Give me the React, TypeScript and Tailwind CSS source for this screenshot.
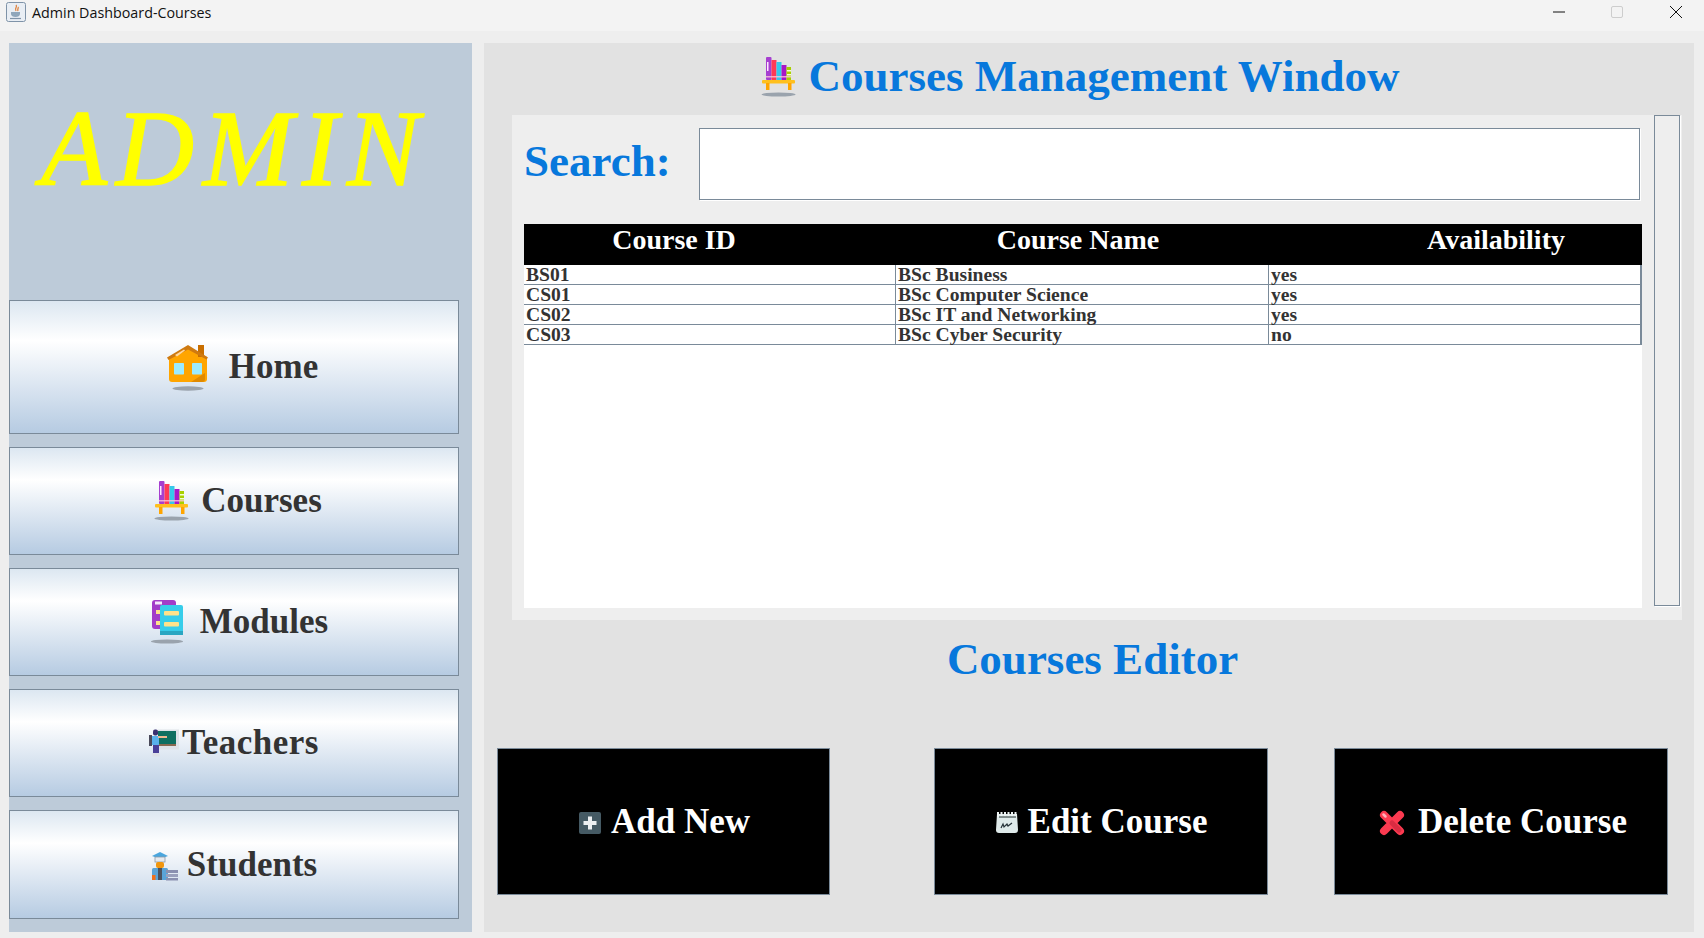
import React from 'react';

const serif = "font-['Liberation_Serif',serif]";

const JavaIcon = () => (
  <svg width="20" height="20" viewBox="0 0 20 20">
    <rect x="0.5" y="0.5" width="19" height="19" rx="2" fill="#e9eef4" stroke="#7f93a8" />
    <path d="M10 3c2 2-2 3 0 6M12 5c1 1-1 2 0 4" stroke="#e0803a" strokeWidth="1.3" fill="none" />
    <path d="M5 10h9v2c0 2-2 3-4.500 3S5 14 5 12z" fill="#8fa6bb" />
    <path d="M4 16.500h11" stroke="#7f93a8" strokeWidth="1.200" />
  </svg>
);

const HouseIcon = () => (
  <svg width="42" height="48" viewBox="0 0 42 48">
    <ellipse cx="21" cy="45.500" rx="15.500" ry="2.200" fill="#9aa3ad" />
    <path d="M2 14L21 3l19 11v22q0 3-3 3H5q-3 0-3-3z" fill="#ffa500" />
    <path d="M31 2h6v12h-6z" fill="#c96f00" />
    <path d="M0 14.500L21 2l20 12.500-1.500 2L21 6.500 1.500 17z" fill="#cf7a10" />
    <path d="M8 12l9-5.500 1 1-8 6z" fill="#ffd9a0" />
    <path d="M24 39l14-9v6q0 3-3 3z" fill="#e08a00" />
    <rect x="7" y="20" width="10" height="11.500" rx="0.800" fill="#9cebff" />
    <rect x="25" y="20" width="10" height="11.500" rx="0.800" fill="#9cebff" />
  </svg>
);

const ShelfIcon = () => (
  <svg width="35" height="40" viewBox="0 0 35 40">
    <ellipse cx="17.500" cy="37.500" rx="17" ry="2" fill="#9aa3ad" />
    <rect x="5" y="0" width="5.500" height="23" rx="1" fill="#a63fd0" />
    <rect x="6" y="5" width="1.500" height="9" fill="#ffe8ff" />
    <rect x="10.500" y="3" width="5" height="20" fill="#ff3a55" />
    <rect x="15.500" y="5" width="5" height="18" fill="#36c8ea" />
    <rect x="20.500" y="8" width="5" height="15" fill="#a816c8" />
    <rect x="25.500" y="10" width="4.500" height="13" fill="#a8d000" />
    <rect x="26" y="13" width="4" height="1.500" fill="#f4ffd0" />
    <rect x="26" y="17" width="4" height="1.500" fill="#f4ffd0" />
    <rect x="5" y="19" width="25" height="1.500" fill="#ffc6d8" opacity="0.800" />
    <rect x="1" y="23" width="33" height="3.500" rx="1" fill="#ffc01e" />
    <rect x="5" y="26" width="3.500" height="7" fill="#ffa500" />
    <rect x="27" y="26" width="3.500" height="7" fill="#ffa500" />
  </svg>
);

const BooksIcon = () => (
  <svg width="33" height="44" viewBox="0 0 33 44">
    <ellipse cx="16" cy="41.500" rx="16" ry="2" fill="#9aa3ad" />
    <rect x="1" y="0" width="24" height="29" rx="3" fill="#a23cc8" />
    <rect x="4" y="1.500" width="7" height="3" fill="#f5e8fa" />
    <rect x="5" y="10" width="10" height="4" fill="#ffe28a" />
    <rect x="5" y="21" width="8" height="4" fill="#ffe28a" />
    <rect x="9" y="5" width="23" height="30" rx="2" fill="#36cdea" />
    <rect x="13" y="11" width="15" height="4.500" rx="1" fill="#ffe28a" />
    <rect x="13" y="22" width="15" height="4.500" rx="1" fill="#ffe28a" />
    <rect x="9" y="31" width="23" height="4" fill="#2aa6c2" />
  </svg>
);

const TeacherIcon = () => (
  <svg width="30" height="28" viewBox="0 0 30 28">
    <rect x="9" y="0.500" width="21" height="20" fill="#dfe3e8" />
    <rect x="9" y="2" width="18" height="13" fill="#0f6f60" />
    <rect x="9" y="15" width="18" height="2" fill="#8a6a50" />
    <rect x="0" y="6" width="3" height="11" fill="#4a4a5a" />
    <rect x="3" y="7" width="7" height="9" fill="#5ab0ea" />
    <rect x="9" y="7" width="9" height="2" fill="#f0b890" />
    <rect x="4" y="0.500" width="5" height="6" rx="2" fill="#3a3070" />
    <rect x="4" y="16" width="6" height="8" fill="#4a3f98" />
    <rect x="3.500" y="24" width="7" height="3.500" fill="#dde0e6" />
  </svg>
);

const StudentIcon = () => (
  <svg width="28" height="30" viewBox="0 0 28 30">
    <path d="M1 5l8-4 8 4-8 3z" fill="#4aa6de" />
    <rect x="4" y="6" width="10" height="5" fill="#e6e9ee" stroke="#8a9aa8" strokeWidth="0.800" />
    <rect x="5" y="11" width="8" height="6" rx="2" fill="#f0960f" />
    <rect x="1" y="17" width="16" height="12" rx="1.500" fill="#5aa4d8" />
    <rect x="7" y="17" width="4" height="12" fill="#4a5260" />
    <rect x="1" y="24" width="3.500" height="5" fill="#f0701a" />
    <rect x="15" y="19" width="12" height="3" fill="#8a90b0" />
    <rect x="15" y="23" width="12" height="3" fill="#9aa0bc" />
    <rect x="15" y="27" width="12" height="2.500" fill="#8a90b0" />
  </svg>
);

const PlusIcon = () => (
  <svg width="22" height="22" viewBox="0 0 22 22">
    <rect width="22" height="22" rx="2" fill="#455a64" />
    <path d="M11 4.500v13M4.500 11h13" stroke="#eceff1" strokeWidth="4" />
  </svg>
);

const NoteIcon = () => (
  <svg width="24" height="22" viewBox="0 0 24 22">
    <path d="M2 2h20l1 16q0 3-3 3H4q-3 0-3-3z" fill="#dfeaea" />
    <path d="M3 0v5M6.500 0v5M10 0v5M13.500 0v5M17 0v5M20.500 0v5" stroke="#eef4f4" strokeWidth="2" />
    <path d="M4 5h17" stroke="#1c2a2a" strokeWidth="1" />
    <path d="M6 16l2-4 1 3 3-3 1 2 4-3" stroke="#263238" strokeWidth="1.200" fill="none" />
  </svg>
);

const CrossIcon = () => (
  <svg width="26" height="26" viewBox="0 0 26 26">
    <path d="M5 5l16 16M21 5L5 21" stroke="#fb3a50" strokeWidth="8" strokeLinecap="round" />
    <path d="M13 13l7 7" stroke="#d92c42" strokeWidth="5" strokeLinecap="round" />
    <path d="M4.500 4.500l2 2" stroke="#ffb0ba" strokeWidth="2.500" strokeLinecap="round" />
  </svg>
);

const navItems = [
  { label: 'Home', icon: <HouseIcon />, cls: 'gap-[20px] h-[134px] pl-[17px]' },
  { label: 'Courses', icon: <ShelfIcon />, cls: 'gap-[12px] h-[108px] pl-[8px]' },
  { label: 'Modules', icon: <BooksIcon />, cls: 'gap-[16px] h-[108px] pl-[11px]' },
  { label: 'Teachers', icon: <TeacherIcon />, cls: 'gap-[3px] h-[108px] tracking-[0.5px]' },
  { label: 'Students', icon: <StudentIcon />, cls: 'gap-[8px] h-[109px] pt-[2px]' },
];

const courses = [
  { id: 'BS01', name: 'BSc Business', available: 'yes' },
  { id: 'CS01', name: 'BSc Computer Science', available: 'yes' },
  { id: 'CS02', name: 'BSc IT and Networking', available: 'yes' },
  { id: 'CS03', name: 'BSc Cyber Security', available: 'no' },
];

const App = () => {
  return (
    <div className={`w-[1704px] h-[938px] flex flex-col overflow-hidden bg-[#eeeeee] ${serif}`}>
      <div className="h-[31px] shrink-0 bg-[#f3f3f3] flex items-start pt-[2px] pl-[6px] font-['Open_Sans',sans-serif]">
        <JavaIcon />
        <span className="ml-[6px] mt-[1px] text-[14.3px] leading-[20px] text-[#111]">Admin Dashboard-Courses</span>
        <div className="ml-auto flex items-center pt-[4px]">
          <svg width="12" height="12" viewBox="0 0 12 12" className="mr-[46px]">
            <path d="M0 6h12" stroke="#111" strokeWidth="1" />
          </svg>
          <div className="w-[12px] h-[12px] rounded-[2px] border border-[#cdcdcd] mr-[47px]" />
          <svg width="12" height="12" viewBox="0 0 12 12" className="mr-[22px]">
            <path d="M0 0l12 12M12 0L0 12" stroke="#111" strokeWidth="1" />
          </svg>
        </div>
      </div>

      <div className="flex pl-[9px] pt-[12px]">
        <aside className="w-[463px] h-[889px] bg-[#bdcbd9] flex flex-col">
          <div className="h-[257px] pl-[32px] pt-[46px]">
            <span className="text-[108px] leading-[120px] italic text-[#ffff00] tracking-[9px] [-webkit-text-stroke:1.5px_#ffff00]">ADMIN</span>
          </div>
          <nav className="flex flex-col gap-[13px] w-[450px]">
            {navItems.map((item) => (
              <button
                key={item.label}
                className={`${item.cls} flex items-center justify-center border border-[#7a8a99] bg-linear-to-b from-[#dce7f1] via-white via-30% to-[#b6cbe2] text-[35px] font-bold text-[#333333]`}
              >
                {item.icon}
                <span>{item.label}</span>
              </button>
            ))}
          </nav>
        </aside>

        <main className="ml-[12px] w-[1210px] h-[889px] bg-[#e2e2e2] flex flex-col">
          <div className="h-[72px] shrink-0 flex items-center justify-center gap-[13px] pr-[18px] pb-[4px]">
            <ShelfIcon />
            <h1 className="text-[45px] font-bold text-[#0778dc]">Courses Management Window</h1>
          </div>

          <section className="ml-[28px] w-[1170px] h-[505px] shrink-0 bg-[#eeeeee] flex">
            <div className="w-[1130px] pl-[12px] flex flex-col">
              <div className="h-[109px] shrink-0 flex items-start pt-[13px]">
                <label className="w-[175px] h-[68px] flex items-center text-[45px] font-bold text-[#0778dc]">Search:</label>
                <input className="w-[941px] h-[72px] bg-white border border-[#7a8a99] outline-none shadow-[1px_1px_0_#ffffff]" />
              </div>
              <div className="w-[1118px] h-[384px] bg-white">
                <div className="h-[41px] bg-black text-white text-[28px] font-bold grid grid-cols-[300px_508px_310px] leading-[31px]">
                  <div className="text-center">Course ID</div>
                  <div className="text-center">Course Name</div>
                  <div className="text-center pl-[18px]">Availability</div>
                </div>
                {courses.map((course) => (
                  <div
                    key={course.id}
                    className="h-[20px] grid grid-cols-[372px_373px_1fr] border-b border-r-2 border-[#7a8a99] text-[19.6px] leading-[19px] font-bold text-[#333333]"
                  >
                    <div className="pl-[2px] border-r border-[#7a8a99]">{course.id}</div>
                    <div className="pl-[2px] border-r border-[#7a8a99]">{course.name}</div>
                    <div className="pl-[2px]">{course.available}</div>
                  </div>
                ))}
              </div>
            </div>
            <div className="ml-[12px] w-[26px] h-[491px] border border-[#7a8a99] bg-[#eeeeee] shadow-[1px_1px_0_#ffffff]" />
          </section>

          <div className="h-[128px] shrink-0 flex items-center justify-center pl-[7px] pb-[49px]">
            <h2 className="text-[45px] font-bold text-[#0778dc]">Courses Editor</h2>
          </div>

          <div className="flex pl-[13px] text-[35px] font-bold text-white">
            <button className="w-[333px] h-[147px] bg-black border border-[#7a8a99] flex items-center justify-center gap-[10px] pl-[2px] pt-[2px]">
              <PlusIcon />
              <span>Add New</span>
            </button>
            <button className="ml-[104px] w-[334px] h-[147px] bg-black border border-[#7a8a99] flex items-center justify-center gap-[9px] pt-[2px]">
              <NoteIcon />
              <span>Edit Course</span>
            </button>
            <button className="ml-[66px] w-[334px] h-[147px] bg-black border border-[#7a8a99] flex items-center justify-center gap-[13px] pl-[4px] pt-[2px]">
              <CrossIcon />
              <span>Delete Course</span>
            </button>
          </div>
        </main>
      </div>
    </div>
  );
};

export default App;
